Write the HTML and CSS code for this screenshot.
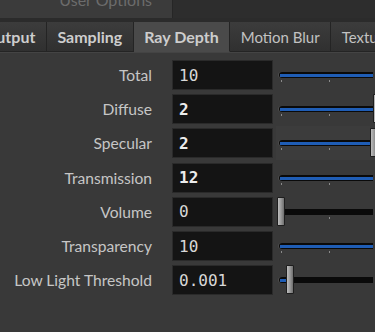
FILE: index.html
```html
<!DOCTYPE html>
<html>
<head>
<meta charset="utf-8">
<link rel="stylesheet" href="styles.css">
</head>
<body>
<div class="header">
  <div class="hdr-left"><span class="hdr-title">User Options</span></div>
  <div class="hdr-right"></div>
</div>
<div class="band"></div>
<div class="tabbar">
  <div class="tab bold first">Output</div>
  <div class="tab bold">Sampling</div>
  <div class="tab bold active">Ray Depth</div>
  <div class="tab">Motion Blur</div>
  <div class="tab">Texture</div>
</div>
<div class="tabline"></div>
<div class="params">
  <div class="row">
    <div class="label">Total</div>
    <div class="field">10</div>
    <div class="slider"><div class="track"><div class="fill" style="width:100%"></div></div><div class="ticks"><span class="tick"></span><span class="tick"></span></div></div>
  </div>
  <div class="row">
    <div class="label">Diffuse</div>
    <div class="field bold">2</div>
    <div class="slider"><div class="track"><div class="fill" style="width:100%"></div></div><div class="ticks"><span class="tick"></span><span class="tick"></span></div><div class="handle" style="left:94px"></div></div>
  </div>
  <div class="row hover">
    <div class="label">Specular</div>
    <div class="field bold">2</div>
    <div class="slider"><div class="track"><div class="fill" style="width:100%"></div></div><div class="ticks"><span class="tick"></span><span class="tick"></span></div><div class="handle" style="left:94px"></div></div>
  </div>
  <div class="row">
    <div class="label">Transmission</div>
    <div class="field bold">12</div>
    <div class="slider"><div class="track"><div class="fill" style="width:100%"></div></div><div class="ticks"><span class="tick"></span><span class="tick"></span></div></div>
  </div>
  <div class="row">
    <div class="label">Volume</div>
    <div class="field">0</div>
    <div class="slider"><div class="track"><div class="fill" style="width:0"></div></div><div class="ticks"><span class="tick hidden"></span><span class="tick"></span></div><div class="handle" style="left:-2px"></div></div>
  </div>
  <div class="row">
    <div class="label">Transparency</div>
    <div class="field">10</div>
    <div class="slider"><div class="track"><div class="fill" style="width:100%"></div></div><div class="ticks"><span class="tick"></span><span class="tick"></span></div></div>
  </div>
  <div class="row">
    <div class="label">Low Light Threshold</div>
    <div class="field">0.001</div>
    <div class="slider"><div class="track"><div class="fill" style="width:7px"></div></div><div class="ticks"><span class="tick hidden"></span><span class="tick hidden"></span></div><div class="handle" style="left:7px"></div></div>
  </div>
</div>
</body>
</html>
```

FILE: styles.css
```css
html, body {
  margin: 0;
  padding: 0;
}
body {
  width: 375px;
  height: 332px;
  overflow: hidden;
  background: #393939;
  font-family: Lato, "Noto Sans", sans-serif;
  color: #c9c9c9;
}
.header {
  display: flex;
  height: 18px;
}
.hdr-left {
  width: 172px;
  background: #3b3b3b;
  overflow: hidden;
  display: flex;
  justify-content: flex-end;
  padding-right: 20px;
  box-sizing: border-box;
}
.hdr-title {
  font-size: 16px;
  line-height: 16px;
  color: #6c6c6c;
  margin-top: -8px;
}
.hdr-right {
  flex: 1;
  background: #2d2d2d;
  border-left: 1px solid #262626;
}
.band {
  height: 4px;
  background: #2b2b2b;
}
.tabbar {
  display: flex;
  height: 30px;
  background: #2b2b2b;
  overflow: hidden;
}
.tab {
  flex: none;
  height: 30px;
  padding: 0 10.5px;
  box-sizing: border-box;
  display: flex;
  align-items: center;
  font-size: 15px;
  color: #c2c2c2;
  background: linear-gradient(#3c3c3c, #303030);
  border-right: 1px solid #242424;
  border-bottom: 1px solid #242424;
}
.tab.first {
  margin-left: -27px;
}
.tab.bold {
  font-weight: bold;
  font-size: 16px;
  color: #cdcdcd;
}
.tab.active {
  background: #4a4a4a;
  border-bottom-color: #4a4a4a;
}
.tabline {
  height: 1px;
  background: #444444;
}
.params {
  padding-top: 5px;
}
.row {
  display: flex;
  align-items: center;
  height: 34.2px;
}
.label {
  width: 152px;
  flex: none;
  text-align: right;
  font-size: 15.6px;
  color: #c6c6c6;
  margin-right: 20px;
}
.field {
  width: 101px;
  height: 30px;
  box-sizing: border-box;
  flex: none;
  background: #141414;
  border: 1px solid #2a2a2a;
  font-family: "DejaVu Sans Mono", monospace;
  font-size: 16px;
  color: #d8d8d8;
  display: flex;
  align-items: center;
  padding-left: 6px;
}
.field.bold {
  font-weight: bold;
  color: #ececec;
}
.slider {
  position: relative;
  flex: none;
  width: 94px;
  height: 34px;
  margin-left: 6px;
  padding-top: 14px;
  box-sizing: border-box;
}
.row.hover .slider {
  background: #3c3c3c;
  margin-left: 3px;
  padding-left: 3px;
}
.track {
  height: 6px;
  background: #0a0a0a;
  border-radius: 3px 0 0 3px;
  box-shadow: -1px 0 0 #4c4c4c;
  padding: 2px 0 0 1px;
  box-sizing: border-box;
}
.fill {
  height: 3px;
  background: #1f5db5;
}
.ticks {
  display: flex;
  height: 2px;
  margin-top: 2px;
  padding-left: 2px;
  gap: 47px;
}
.tick {
  width: 1px;
  height: 2px;
  background: #8a8a8a;
}
.tick.hidden {
  visibility: hidden;
}
.handle {
  position: absolute;
  top: 2px;
  width: 8px;
  height: 29px;
  box-sizing: border-box;
  border: 1px solid #1e1e1e;
  border-radius: 1px;
  background: linear-gradient(to right, #bdbdbd, #9a9a9a 50%, #6e6e6e);
}
```
